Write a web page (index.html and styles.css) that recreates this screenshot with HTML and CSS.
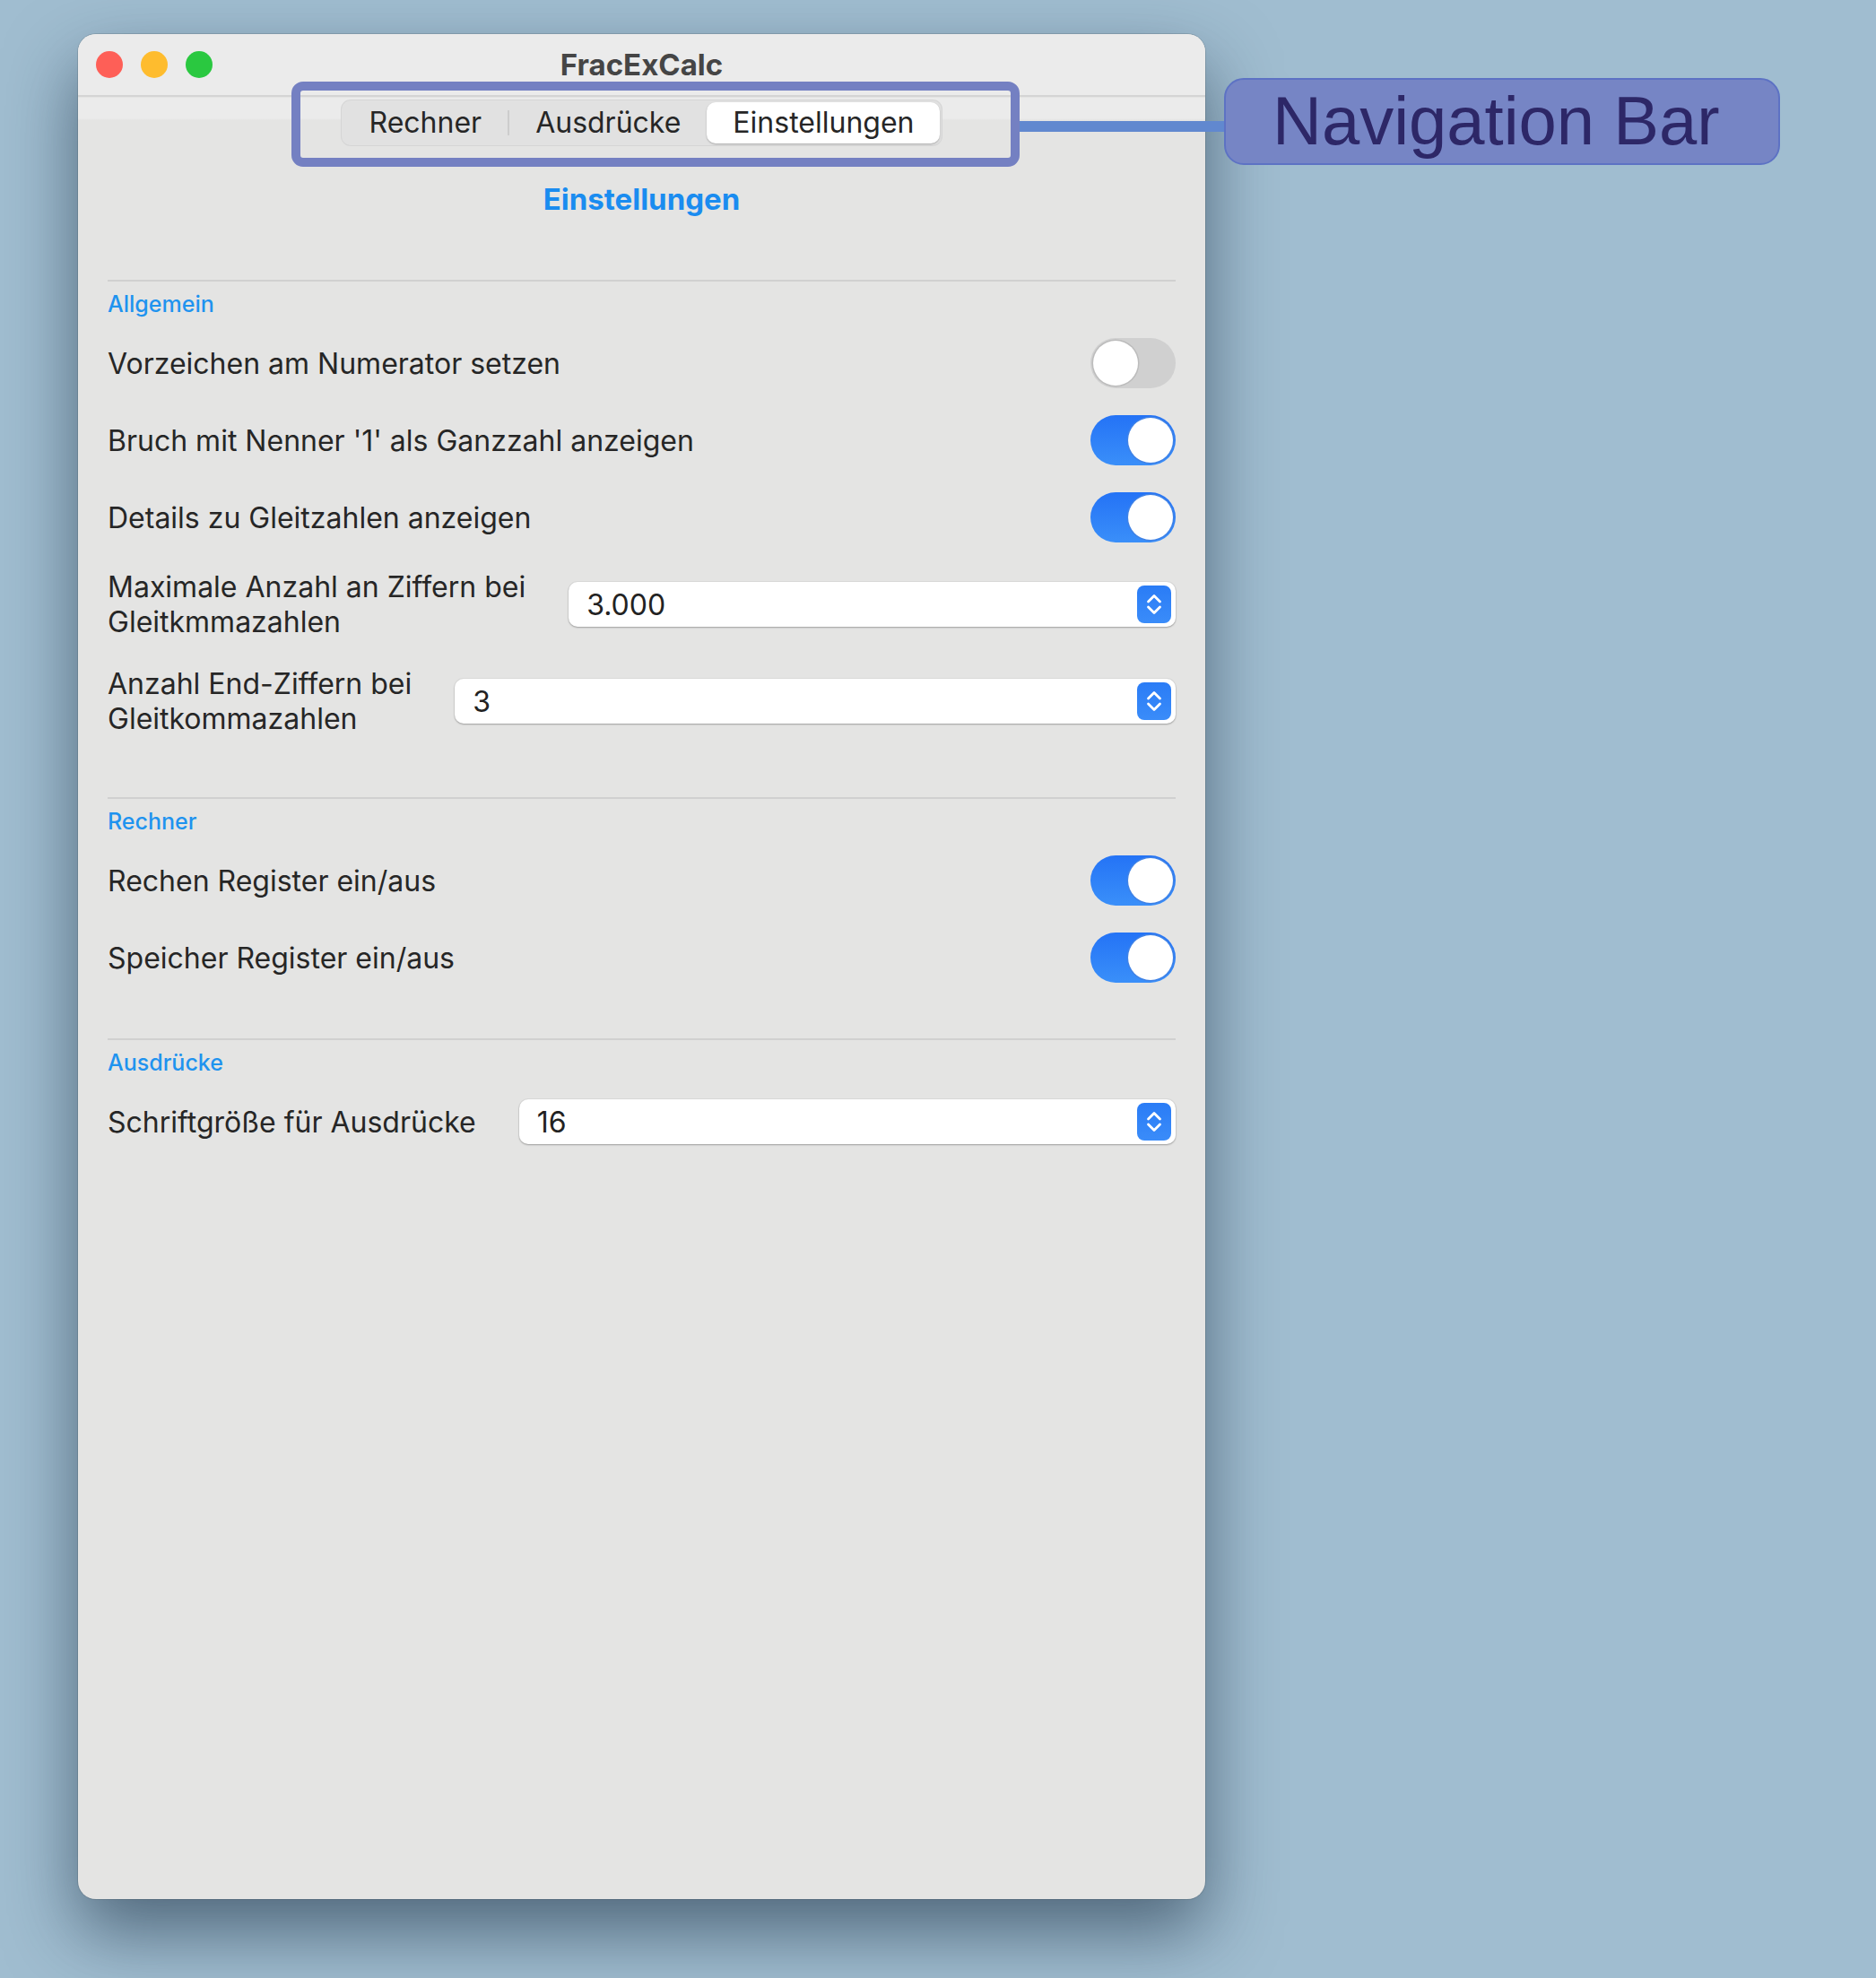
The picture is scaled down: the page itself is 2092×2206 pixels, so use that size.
FILE: index.html
```html
<!DOCTYPE html>
<html lang="de">
<head>
  <meta charset="UTF-8">
  <meta name="viewport" content="width=device-width, initial-scale=1.0">
  <title>FracExCalc - Einstellungen</title>
  <link rel="stylesheet" href="styles.css">
</head>
<body>
  <div class="desktop">

    <div class="window">
      <!-- Title bar -->
      <div class="titlebar">
        <div class="lights">
          <span class="light red"></span>
          <span class="light yellow"></span>
          <span class="light green"></span>
        </div>
        <div class="title">FracExCalc</div>
        <div></div>
      </div>

      <!-- Toolbar with tabs -->
      <div class="toolbar">
        <div class="segmented">
          <div class="segment">Rechner</div>
          <div class="divider"></div>
          <div class="segment">Ausdrücke</div>
          <div class="segment selected">Einstellungen</div>
        </div>
      </div>

      <div class="content">
        <h1 class="page-title">Einstellungen</h1>

        <!-- Allgemein -->
        <section class="group">
          <h2 class="group-title">Allgemein</h2>
          <div class="row">
            <span class="label">Vorzeichen am Numerator setzen</span>
            <span class="toggle"></span>
          </div>
          <div class="row">
            <span class="label">Bruch mit Nenner '1' als Ganzzahl anzeigen</span>
            <span class="toggle on"></span>
          </div>
          <div class="row">
            <span class="label">Details zu Gleitzahlen anzeigen</span>
            <span class="toggle on"></span>
          </div>
          <div class="row tall">
            <span class="label">Maximale Anzahl an Ziffern bei<br>Gleitkmmazahlen</span>
            <div class="field">
              <span class="value">3.000</span>
              <span class="stepper">
                <svg width="38" height="42" viewBox="0 0 38 42"><path d="M12.5 18 L19 11.5 L25.5 18 M12.5 24 L19 30.5 L25.5 24" fill="none" stroke="#fff" stroke-width="2.8" stroke-linecap="round" stroke-linejoin="round"/></svg>
              </span>
            </div>
          </div>
          <div class="row tall">
            <span class="label">Anzahl End-Ziffern bei<br>Gleitkommazahlen</span>
            <div class="field">
              <span class="value">3</span>
              <span class="stepper">
                <svg width="38" height="42" viewBox="0 0 38 42"><path d="M12.5 18 L19 11.5 L25.5 18 M12.5 24 L19 30.5 L25.5 24" fill="none" stroke="#fff" stroke-width="2.8" stroke-linecap="round" stroke-linejoin="round"/></svg>
              </span>
            </div>
          </div>
        </section>

        <!-- Rechner -->
        <section class="group">
          <h2 class="group-title">Rechner</h2>
          <div class="row">
            <span class="label">Rechen Register ein/aus</span>
            <span class="toggle on"></span>
          </div>
          <div class="row">
            <span class="label">Speicher Register ein/aus</span>
            <span class="toggle on"></span>
          </div>
        </section>

        <!-- Ausdrücke -->
        <section class="group">
          <h2 class="group-title">Ausdrücke</h2>
          <div class="row">
            <span class="label">Schriftgröße für Ausdrücke</span>
            <div class="field">
              <span class="value">16</span>
              <span class="stepper">
                <svg width="38" height="42" viewBox="0 0 38 42"><path d="M12.5 18 L19 11.5 L25.5 18 M12.5 24 L19 30.5 L25.5 24" fill="none" stroke="#fff" stroke-width="2.8" stroke-linecap="round" stroke-linejoin="round"/></svg>
              </span>
            </div>
          </div>
        </section>
      </div>
    </div>

    <!-- Annotation -->
    <div class="callout-box"></div>
    <div class="callout-line"></div>
    <div class="callout-label">Navigation Bar</div>

  </div>
</body>
</html>
```

FILE: styles.css
```css
body {
  margin: 0;
  padding: 0;
  background: #a0bdd0;
  font-family: Inter, "Noto Sans", sans-serif;
  color: #262626;
}

.desktop {
  position: relative;
  height: 2206px;
  padding: 38px 0 0 87px;
  box-sizing: border-box;
  overflow: hidden;
}

/* Window */
.window {
  width: 1257px;
  height: 2080px;
  background: #e4e4e3;
  border-radius: 20px;
  overflow: hidden;
  box-shadow: 0 36px 80px rgba(25, 45, 65, 0.6), 0 0 0 1px rgba(0, 0, 0, 0.12);
  display: flex;
  flex-direction: column;
}

.titlebar {
  height: 68px;
  background: #ebebeb;
  border-bottom: 2px solid #d4d4d4;
  display: grid;
  grid-template-columns: 1fr auto 1fr;
  align-items: center;
}

.lights {
  display: flex;
  gap: 20px;
  padding-left: 20px;
}

.light {
  width: 30px;
  height: 30px;
  border-radius: 50%;
}

.light.red { background: #fe5f57; }
.light.yellow { background: #febc2e; }
.light.green { background: #2ac840; }

.title {
  font-size: 33px;
  font-weight: 700;
  color: #454545;
}

/* Toolbar / tabs */
.toolbar {
  display: flex;
  justify-content: center;
  padding-top: 2px;
  background: linear-gradient(#ebebeb 0, #ebebeb 23px, #e4e4e3 25px);
  border-top: 1px solid transparent;
}

.segmented {
  display: flex;
  align-items: center;
  height: 52px;
  padding: 0 3px;
  background: #e1e1e1;
  border-radius: 11px;
  box-shadow: inset 0 0 0 1px rgba(0, 0, 0, 0.05);
}

.segment {
  padding: 0 29px;
  font-size: 32px;
  line-height: 46px;
  color: #262626;
}

.segment.selected {
  background: #fff;
  border-radius: 10px;
  box-shadow: 0 1px 2px rgba(0, 0, 0, 0.25);
}

.divider {
  width: 2px;
  height: 28px;
  background: #cdcdcd;
}

/* Content */
.content {
  padding: 0 33px;
}

.page-title {
  margin: 39px 0 70px;
  text-align: center;
  font-size: 33px;
  line-height: 40px;
  font-weight: 700;
  color: #1a8cf0;
}

.group {
  border-top: 2px solid #d0d0d0;
  padding-bottom: 47px;
}

.group:first-of-type {
  padding-bottom: 53px;
}

.group-title {
  margin: 10px 0 8px;
  font-size: 25px;
  line-height: 30px;
  font-weight: 500;
  color: #1f93ef;
}

.row {
  display: flex;
  align-items: center;
  justify-content: space-between;
  gap: 48px;
  min-height: 86px;
}

.row.tall {
  padding: 11px 0;
}

.label {
  font-size: 32px;
  line-height: 39px;
  white-space: nowrap;
}

/* Toggle switch */
.toggle {
  position: relative;
  flex: none;
  width: 95px;
  height: 56px;
  border-radius: 28px;
  background: #d0d0d0;
}

.toggle::after {
  content: "";
  position: absolute;
  top: 3px;
  left: 3px;
  width: 50px;
  height: 50px;
  border-radius: 50%;
  background: #fff;
  box-shadow: 0 0 0 1.5px #bcbcbc;
}

.toggle.on {
  background: linear-gradient(#2473f6, #3a8ff9);
}

.toggle.on::after {
  left: 42px;
  box-shadow: 0 0 0 1.5px #3f82e6;
}

/* Number field with stepper */
.field {
  flex: 1;
  display: flex;
  align-items: center;
  justify-content: space-between;
  height: 50px;
  padding: 0 5px 0 20px;
  background: #fff;
  border-radius: 10px;
  box-shadow: 0 1px 2px rgba(0, 0, 0, 0.28), 0 0 0 1px rgba(0, 0, 0, 0.04);
}

.value {
  font-size: 32px;
  color: #222;
}

.stepper {
  display: flex;
  width: 38px;
  height: 42px;
  border-radius: 8px;
  background: linear-gradient(#2a7cf6, #3a8cf9);
}

/* Annotation */
.callout-box {
  position: absolute;
  left: 325px;
  top: 91px;
  width: 792px;
  height: 75px;
  border: 10px solid #7480c2;
  border-radius: 13px;
}

.callout-line {
  position: absolute;
  left: 1137px;
  top: 135px;
  width: 230px;
  height: 12px;
  background: #6188cf;
}

.callout-label {
  position: absolute;
  left: 1365px;
  top: 87px;
  width: 620px;
  height: 97px;
  box-sizing: border-box;
  padding-left: 52px;
  background: #7685c5;
  border: 2px solid #5d72c4;
  border-radius: 22px;
  font-family: "Liberation Sans", Arial, sans-serif;
  font-size: 76px;
  line-height: 91px;
  color: #2d2767;
}
```
